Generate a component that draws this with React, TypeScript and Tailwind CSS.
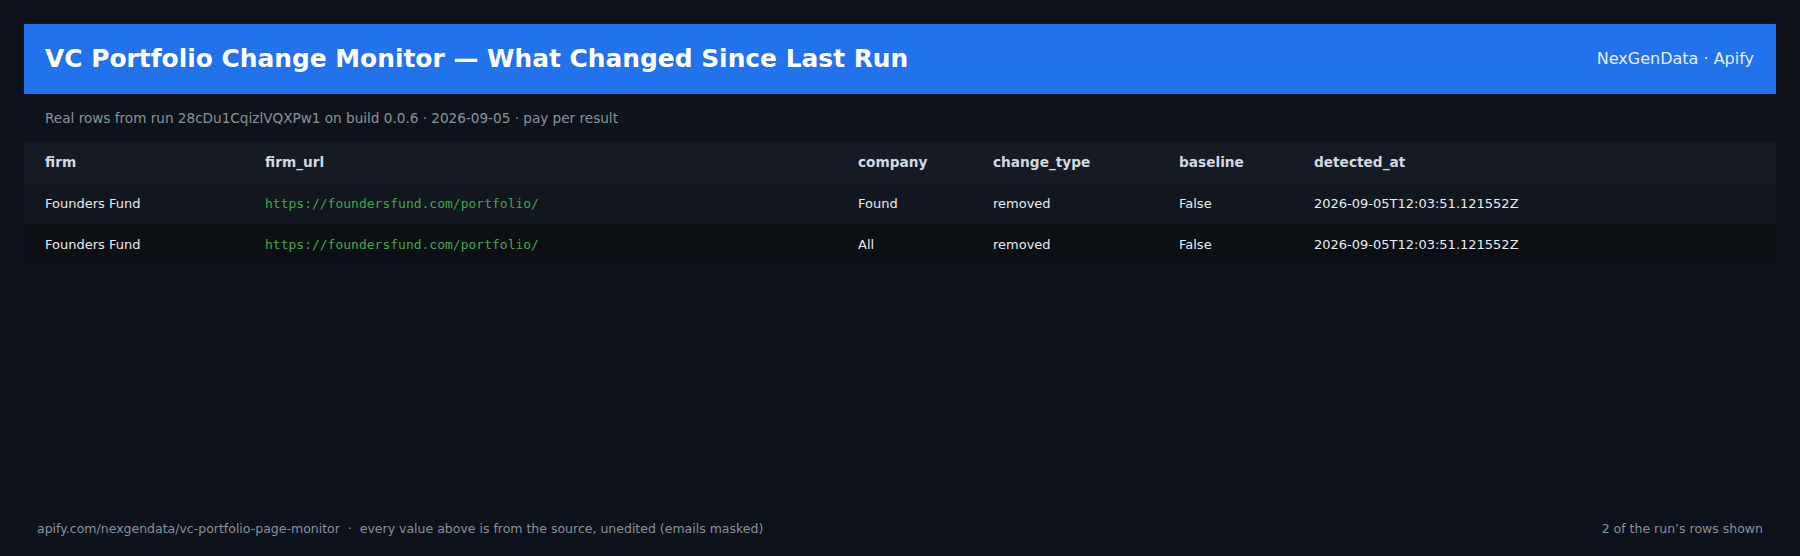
import React from "react";

const cols = ["w-[220px]", "w-[593px]", "w-[135px]", "w-[186px]", "w-[135px]", "flex-1"];

const headers = ["firm", "firm_url", "company", "change_type", "baseline", "detected_at"];

const rows = [
  {
    firm: "Founders Fund",
    url: "https://foundersfund.com/portfolio/",
    company: "Found",
    change: "removed",
    baseline: "False",
    detected: "2026-09-05T12:03:51.121552Z",
  },
  {
    firm: "Founders Fund",
    url: "https://foundersfund.com/portfolio/",
    company: "All",
    change: "removed",
    baseline: "False",
    detected: "2026-09-05T12:03:51.121552Z",
  },
];

const App: React.FC = () => {
  return (
    <div
      className="h-[556px] w-full flex flex-col bg-[#0e121a] px-[24px] pt-[24px] pb-[17px]"
      style={{ fontFamily: '"DejaVu Sans", "Noto Sans", sans-serif' }}
    >
      {/* Title bar */}
      <div className="h-[70px] flex items-center justify-between bg-[#2272eb] pl-[21px] pr-[22px]">
        <h1 className="text-[24.9px] font-bold text-white">
          VC Portfolio Change Monitor — What Changed Since Last Run
        </h1>
        <span className="text-[16px] text-[#e3edfd]">NexGenData · Apify</span>
      </div>

      {/* Subtitle */}
      <div className="h-[48px] flex items-center px-[21px] text-[13.6px] text-[#8b929c]">
        Real rows from run 28cDu1CqizlVQXPw1 on build 0.0.6 · 2026-09-05 · pay per result
      </div>

      {/* Table */}
      <div className="flex flex-col">
        <div className="h-[41px] flex items-center bg-[#161b23]">
          {headers.map((h, i) => (
            <div key={h} className={`${cols[i]} pl-[21px] text-[13.7px] font-bold text-[#d2d8e0]`}>
              {h}
            </div>
          ))}
        </div>
        {rows.map((r, idx) => (
          <div
            key={idx}
            className={`h-[41px] flex items-center text-[13px] text-[#e8ecf1] ${
              idx % 2 === 0 ? "bg-[#12161e]" : "bg-[#0c0f14]"
            }`}
          >
            <div className={`${cols[0]} pl-[21px]`}>{r.firm}</div>
            <div
              className={`${cols[1]} pl-[21px] text-[13px] text-[#43a64f]`}
              style={{ fontFamily: '"DejaVu Sans Mono", monospace' }}
            >
              {r.url}
            </div>
            <div className={`${cols[2]} pl-[21px]`}>{r.company}</div>
            <div className={`${cols[3]} pl-[21px]`}>{r.change}</div>
            <div className={`${cols[4]} pl-[21px]`}>{r.baseline}</div>
            <div className={`${cols[5]} pl-[21px]`}>{r.detected}</div>
          </div>
        ))}
      </div>

      {/* Footer */}
      <div className="mt-auto h-[20px] flex items-center justify-between px-[13px] text-[12.5px] text-[#8a919b]">
        <span>
          apify.com/nexgendata/vc-portfolio-page-monitor &nbsp;·&nbsp; every value above is from the source, unedited (emails masked)
        </span>
        <span>2 of the run’s rows shown</span>
      </div>
    </div>
  );
};

export default App;
